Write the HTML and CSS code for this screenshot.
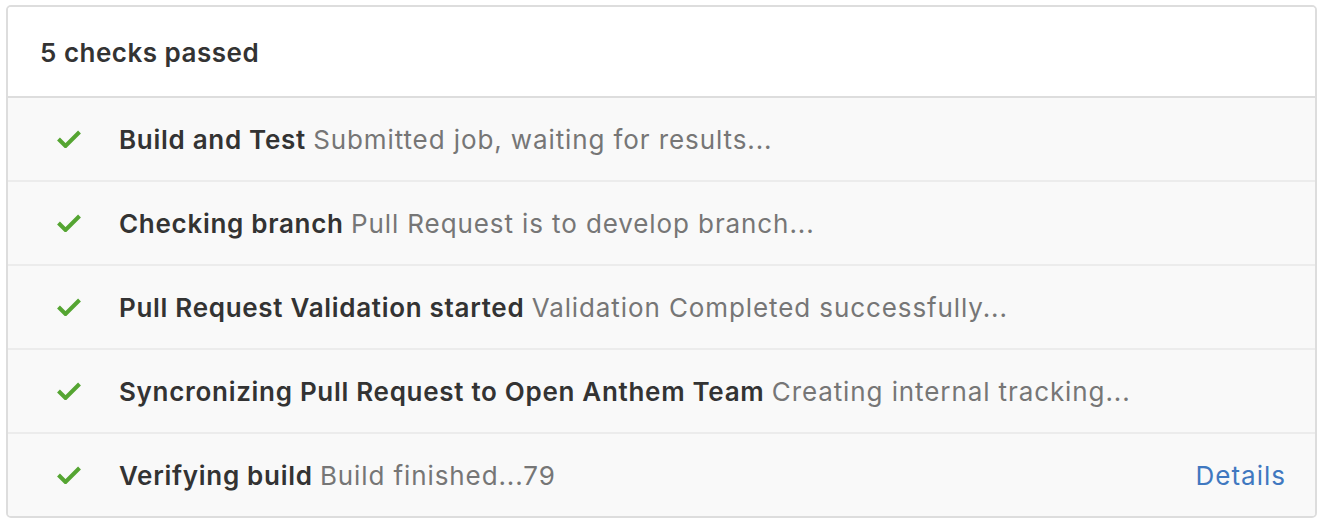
FILE: index.html
```html
<!DOCTYPE html>
<html>
<head>
<meta charset="utf-8">
<link rel="stylesheet" href="styles.css">
</head>
<body>
<div class="box">
  <div class="header">5 checks passed</div>
  <div class="row">
    <svg class="check" viewBox="0 0 24 18" width="24" height="18"><path d="M1.5 9 L8.5 16 L22.5 2" fill="none" stroke="#55a532" stroke-width="4"/></svg>
    <div class="text"><strong>Build and Test</strong> <span class="desc">Submitted job, waiting for results...</span></div>
  </div>
  <div class="row">
    <svg class="check" viewBox="0 0 24 18" width="24" height="18"><path d="M1.5 9 L8.5 16 L22.5 2" fill="none" stroke="#55a532" stroke-width="4"/></svg>
    <div class="text"><strong>Checking branch</strong> <span class="desc">Pull Request is to develop branch...</span></div>
  </div>
  <div class="row">
    <svg class="check" viewBox="0 0 24 18" width="24" height="18"><path d="M1.5 9 L8.5 16 L22.5 2" fill="none" stroke="#55a532" stroke-width="4"/></svg>
    <div class="text"><strong>Pull Request Validation started</strong> <span class="desc">Validation Completed successfully...</span></div>
  </div>
  <div class="row">
    <svg class="check" viewBox="0 0 24 18" width="24" height="18"><path d="M1.5 9 L8.5 16 L22.5 2" fill="none" stroke="#55a532" stroke-width="4"/></svg>
    <div class="text"><strong>Syncronizing Pull Request to Open Anthem Team</strong> <span class="desc">Creating internal tracking...</span></div>
  </div>
  <div class="row">
    <svg class="check" viewBox="0 0 24 18" width="24" height="18"><path d="M1.5 9 L8.5 16 L22.5 2" fill="none" stroke="#55a532" stroke-width="4"/></svg>
    <div class="text"><strong>Verifying build</strong> <span class="desc">Build finished...79</span></div>
    <a class="details" href="#">Details</a>
  </div>
</div>
</body>
</html>
```
FILE: styles.css
```css
html, body {
  margin: 0;
  padding: 0;
  background: #fff;
}
body {
  padding: 5px 0 0 6px;
  font-family: Inter, "Liberation Sans", Arial, sans-serif;
  color: #333;
}
.box {
  width: 1307px;
  border: 2px solid #ddd;
  border-radius: 5px;
  overflow: hidden;
}
.header {
  height: 91px;
  box-sizing: border-box;
  padding: 2px 0 0 32px;
  display: flex;
  align-items: center;
  font-size: 26px;
  font-weight: 600;
  letter-spacing: 0.5px;
  color: #333;
  background: #fff;
  border-bottom: 2px solid #ddd;
}
.row {
  height: 84px;
  box-sizing: border-box;
  display: flex;
  align-items: center;
  background: #f9f9f9;
  border-top: 2px solid #ececec;
  padding: 0 29px 0 49px;
}
.header + .row {
  border-top: none;
  height: 82px;
}
.check {
  flex: none;
  margin-right: 38px;
}
.text {
  flex: 1;
  font-size: 26px;
  white-space: nowrap;
}
.text strong {
  font-weight: 600;
  letter-spacing: 0.7px;
  color: #333;
}
.desc {
  color: #767676;
  letter-spacing: 0.9px;
}
.details {
  font-size: 26px;
  letter-spacing: 1px;
  color: #4078c0;
  text-decoration: none;
}
```
